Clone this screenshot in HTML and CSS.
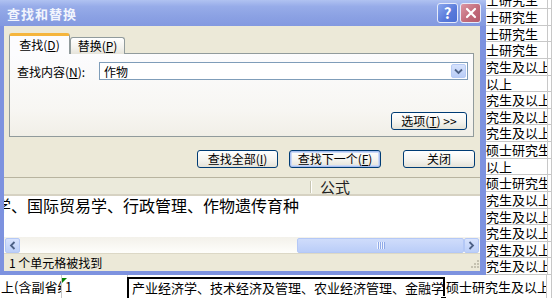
FILE: index.html
```html
<!DOCTYPE html>
<html lang="zh-CN">
<head>
  <meta charset="UTF-8">
  <title>查找和替换</title>
  <link rel="stylesheet" href="styles.css">
</head>
<body>
  <div class="sheet">
    <div class="row"><div class="cell a"></div><div class="cell b"></div><div class="cell c"></div><div class="cell d">在职博士研究生</div><div class="cell e"></div></div>
    <div class="row"><div class="cell a"></div><div class="cell b"></div><div class="cell c"></div><div class="cell d">在职博士研究生</div><div class="cell e"></div></div>
    <div class="row"><div class="cell a"></div><div class="cell b"></div><div class="cell c"></div><div class="cell d">在职博士研究生</div><div class="cell e"></div></div>
    <div class="row"><div class="cell a"></div><div class="cell b"></div><div class="cell c"></div><div class="cell d">在职博士研究生</div><div class="cell e"></div></div>
    <div class="row"><div class="cell a"></div><div class="cell b"></div><div class="cell c"></div><div class="cell d">硕士研究生及以上</div><div class="cell e"></div></div>
    <div class="row"><div class="cell a"></div><div class="cell b"></div><div class="cell c"></div><div class="cell d">本科及以上</div><div class="cell e"></div></div>
    <div class="row"><div class="cell a"></div><div class="cell b"></div><div class="cell c"></div><div class="cell d">硕士研究生及以上</div><div class="cell e"></div></div>
    <div class="row"><div class="cell a"></div><div class="cell b"></div><div class="cell c"></div><div class="cell d">硕士研究生及以上</div><div class="cell e"></div></div>
    <div class="row"><div class="cell a"></div><div class="cell b"></div><div class="cell c"></div><div class="cell d">硕士研究生及以上</div><div class="cell e"></div></div>
    <div class="row"><div class="cell a"></div><div class="cell b"></div><div class="cell c"></div><div class="cell d">全日制硕士研究生</div><div class="cell e"></div></div>
    <div class="row"><div class="cell a"></div><div class="cell b"></div><div class="cell c"></div><div class="cell d">本科及以上</div><div class="cell e"></div></div>
    <div class="row"><div class="cell a"></div><div class="cell b"></div><div class="cell c"></div><div class="cell d">全日制硕士研究生</div><div class="cell e"></div></div>
    <div class="row"><div class="cell a"></div><div class="cell b"></div><div class="cell c"></div><div class="cell d">硕士研究生及以上</div><div class="cell e"></div></div>
    <div class="row"><div class="cell a"></div><div class="cell b"></div><div class="cell c"></div><div class="cell d">硕士研究生及以上</div><div class="cell e"></div></div>
    <div class="row"><div class="cell a"></div><div class="cell b"></div><div class="cell c"></div><div class="cell d">硕士研究生及以上</div><div class="cell e"></div></div>
    <div class="row"><div class="cell a"></div><div class="cell b"></div><div class="cell c"></div><div class="cell d">硕士研究生及以上</div><div class="cell e"></div></div>
    <div class="row"><div class="cell a"></div><div class="cell b"></div><div class="cell c"></div><div class="cell d">硕士研究生及以上</div><div class="cell e"></div></div>
    <div class="row last">
      <div class="cell a">上(含副省级)</div>
      <div class="cell b flag">1</div>
      <div class="cell c sel">产业经济学、技术经济及管理、农业经济管理、金融学</div>
      <div class="cell d">硕士研究生及以上</div>
      <div class="cell e"></div>
    </div>
  </div>

  <div class="dialog">
    <div class="titlebar">
      <span class="title">查找和替换</span>
      <span class="tbtn help">?</span>
      <span class="tbtn close">
        <svg width="12" height="12" viewBox="0 0 12 12"><path d="M2 2 L10 10 M10 2 L2 10" stroke="#fff" stroke-width="2.2" stroke-linecap="round"/></svg>
      </span>
    </div>

    <div class="frame">
      <div class="tabs">
        <div class="tab on">查找(<u>D</u>)</div>
        <div class="tab">替换(<u>P</u>)</div>
      </div>
      <div class="panel">
        <div class="find-row">
          <span class="label">查找内容(<u>N</u>):</span>
          <div class="combo">
            <span>作物</span>
            <span class="dd">
              <svg width="9" height="7" viewBox="0 0 9 7"><path d="M1 1.5 L4.5 5 L8 1.5" fill="none" stroke="#4d6185" stroke-width="1.8"/></svg>
            </span>
          </div>
        </div>
        <div class="opt-row">
          <div class="btn opt">选项(<u>T</u>) &gt;&gt;</div>
        </div>
      </div>

      <div class="buttons">
        <div class="btn all">查找全部(<u>I</u>)</div>
        <div class="btn next">查找下一个(<u>F</u>)</div>
        <div class="btn shut">关闭</div>
      </div>

      <div class="results">
        <div class="lhead">
          <div class="col-val"></div>
          <div class="col-split"></div>
          <div class="col-formula">公式</div>
        </div>
        <div class="list">
          <div class="item">学、国际贸易学、行政管理、作物遗传育种</div>
        </div>
        <div class="hscroll">
          <span class="sarrow">
            <svg width="7" height="9" viewBox="0 0 7 9"><path d="M5.5 1 L2 4.5 L5.5 8" fill="none" stroke="#4d6185" stroke-width="1.8"/></svg>
          </span>
          <div class="track">
            <span class="thumb"><span class="grip"></span></span>
          </div>
          <span class="sarrow">
            <svg width="7" height="9" viewBox="0 0 7 9"><path d="M1.5 1 L5 4.5 L1.5 8" fill="none" stroke="#4d6185" stroke-width="1.8"/></svg>
          </span>
        </div>
        <div class="status">
          <span class="found">1 个单元格被找到</span>
          <svg class="sizegrip" width="10" height="10" viewBox="0 0 10 10">
            <rect x="8" y="0" width="2" height="2" fill="#c4c1b0"/>
            <rect x="5" y="3" width="2" height="2" fill="#c4c1b0"/>
            <rect x="8" y="3" width="2" height="2" fill="#c4c1b0"/>
            <rect x="2" y="6" width="2" height="2" fill="#c4c1b0"/>
            <rect x="5" y="6" width="2" height="2" fill="#c4c1b0"/>
            <rect x="8" y="6" width="2" height="2" fill="#c4c1b0"/>
          </svg>
        </div>
      </div>
    </div>
  </div>
</body>
</html>
```

FILE: styles.css
```css
* {
  box-sizing: border-box;
}

body {
  margin: 0;
  width: 552px;
  height: 298px;
  overflow: hidden;
  position: relative;
  background: #fff;
  font-family: "Noto Sans CJK SC", "Liberation Sans", sans-serif;
  color: #000;
}

/* spreadsheet behind the dialog */
.sheet {
  margin-top: -7.6px;
}

.row {
  display: flex;
  height: 16.625px;
}

.cell {
  height: 100%;
  border-right: 1px solid #c8c8c8;
  border-bottom: 1px solid #c8c8c8;
  overflow: hidden;
  white-space: nowrap;
  font-size: 13px;
  line-height: 16px;
  padding-left: 1px;
}

.a { width: 62px; }
.b { width: 66px; }
.c { width: 318px; }
.d { width: 102px; }
.e { flex: 1; }

.row.last {
  height: 24px;
}

.row.last .cell {
  padding-top: 4px;
}

.flag {
  position: relative;
  padding-left: 3px;
}

.flag::before {
  content: "";
  position: absolute;
  left: 0;
  top: 3px;
  border-top: 5px solid #008000;
  border-right: 5px solid transparent;
}

.sel {
  position: relative;
  border: 2px solid #000;
  margin-left: -1px;
  margin-top: 2px;
  padding-top: 1px !important;
  padding-left: 3px;
  overflow: visible;
}

.sel::after {
  content: "";
  position: absolute;
  right: -4px;
  bottom: -4px;
  width: 5px;
  height: 5px;
  background: #000;
  border: 1px solid #fff;
}

/* dialog window */
.dialog {
  position: absolute;
  left: 0;
  top: 0;
  width: 486px;
  height: 275px;
  display: flex;
  flex-direction: column;
  font-size: 12px;
}

.titlebar {
  height: 26px;
  display: flex;
  align-items: center;
  padding: 0 5px 0 7px;
  background: linear-gradient(#b0c2f1, #97ace9 25%, #8ca2e4 60%, #8399e0);
}

.title {
  flex: 1;
  color: #f2f5fd;
  font-weight: bold;
  font-size: 13px;
  letter-spacing: 1px;
}

.tbtn {
  width: 21px;
  height: 20px;
  border: 1px solid #e6ebfa;
  border-radius: 3px;
  display: flex;
  align-items: center;
  justify-content: center;
  color: #fff;
  font-weight: bold;
  font-size: 15px;
  line-height: 18px;
}

.help {
  margin-right: 2px;
  background: linear-gradient(135deg, #8aa7ee, #5879da 60%, #4b6fd4);
}

.close {
  background: linear-gradient(135deg, #dc97a4, #c06878 60%, #b45b6c);
}

.frame {
  flex: 1;
  display: flex;
  flex-direction: column;
  background: #ece9d8;
  border: solid #7d92df;
  border-width: 0 6px 4px 4px;
}

.tabs {
  display: flex;
  align-items: flex-end;
  margin: 7px 0 -1px 5px;
  position: relative;
}

.tab {
  width: 55px;
  height: 17px;
  border: 1px solid #919b9c;
  border-bottom: 0;
  border-radius: 3px 3px 0 0;
  background: linear-gradient(#fff, #f3f2ee 60%, #e6e4da);
  text-align: center;
  line-height: 15px;
}

.tab.on {
  width: 61px;
  height: 21px;
  border-top: 3px solid #f5b53c;
  background: #fcfcfe;
  line-height: 17px;
}

u {
  text-decoration: underline;
}

.panel {
  height: 84px;
  margin: 0 6px 0 5px;
  border: 1px solid #919b9c;
  background: linear-gradient(#fcfcfe, #f7f6f2 70%, #f1efe7);
  padding: 8px 5px 0 7px;
}

.find-row {
  display: flex;
  align-items: center;
  height: 18px;
}

.label {
  width: 82px;
}

.combo {
  flex: 1;
  height: 18px;
  border: 1px solid #7f9db9;
  background: #fff;
  display: flex;
  align-items: center;
  padding-left: 4px;
}

.dd {
  margin-left: auto;
  margin-right: 1px;
  width: 15px;
  height: 14px;
  border: 1px solid #b7cbf5;
  border-radius: 2px;
  background: linear-gradient(#d6e2fc, #b9cdf7);
  display: flex;
  align-items: center;
  justify-content: center;
}

.opt-row {
  display: flex;
  justify-content: flex-end;
  margin-top: 32px;
  padding-right: 1px;
}

.btn {
  height: 18px;
  border: 1px solid #003c74;
  border-radius: 3px;
  background: linear-gradient(#fff, #f5f4ef 55%, #e4e2d8);
  text-align: center;
  line-height: 16px;
}

.opt { width: 76px; }

.buttons {
  display: flex;
  justify-content: flex-end;
  margin-top: 13px;
  padding-right: 5px;
}

.all { width: 81px; }
.next { width: 92px; margin-left: 11px; box-shadow: inset 0 0 0 1px #a8bff0, inset 0 0 0 2px #cddaf6; }
.shut { width: 72px; margin-left: 22px; }

.results {
  flex: 1;
  display: flex;
  flex-direction: column;
  margin-top: 9px;
  border-top: 1px solid #b8b49f;
}

.lhead {
  height: 18px;
  display: flex;
  background: #ebeadb;
  border-bottom: 2px solid #d6d2c2;
}

.col-val {
  width: 306px;
}

.col-split {
  width: 2px;
  height: 12px;
  margin-top: 3px;
  border-left: 1px solid #c7c5b2;
  border-right: 1px solid #fff;
}

.col-formula {
  padding-left: 8px;
  font-size: 15px;
  line-height: 17px;
  color: #222;
}

.list {
  flex: 1;
  background: #fff;
  overflow: hidden;
}

.item {
  font-size: 16px;
  line-height: 18px;
  white-space: nowrap;
  text-indent: -9px;
}

.hscroll {
  height: 17px;
  display: flex;
  padding: 1px;
  background: linear-gradient(#f3f1ea, #fefefb);
  border-bottom: 1px solid #dcd8c6;
}

.sarrow {
  width: 15px;
  height: 15px;
  border: 1px solid #b4c8f6;
  border-radius: 2px;
  background: linear-gradient(#d8e3fd, #bccff8);
  display: flex;
  align-items: center;
  justify-content: center;
}

.track {
  flex: 1;
  display: flex;
  justify-content: flex-end;
}

.thumb {
  width: 167px;
  height: 15px;
  border: 1px solid #b4c8f6;
  border-radius: 2px;
  background: linear-gradient(#cfdcfb, #bacdf8);
  display: flex;
  align-items: center;
  justify-content: center;
}

.grip {
  width: 8px;
  height: 7px;
  background: repeating-linear-gradient(90deg, #eef3fe 0 1px, #8fa9e8 1px 2px);
}

.status {
  height: 17px;
  display: flex;
  align-items: center;
  padding: 0 1px 0 5px;
}

.found {
  flex: 1;
}

.sizegrip {
  align-self: flex-end;
  margin-bottom: 1px;
}
```
